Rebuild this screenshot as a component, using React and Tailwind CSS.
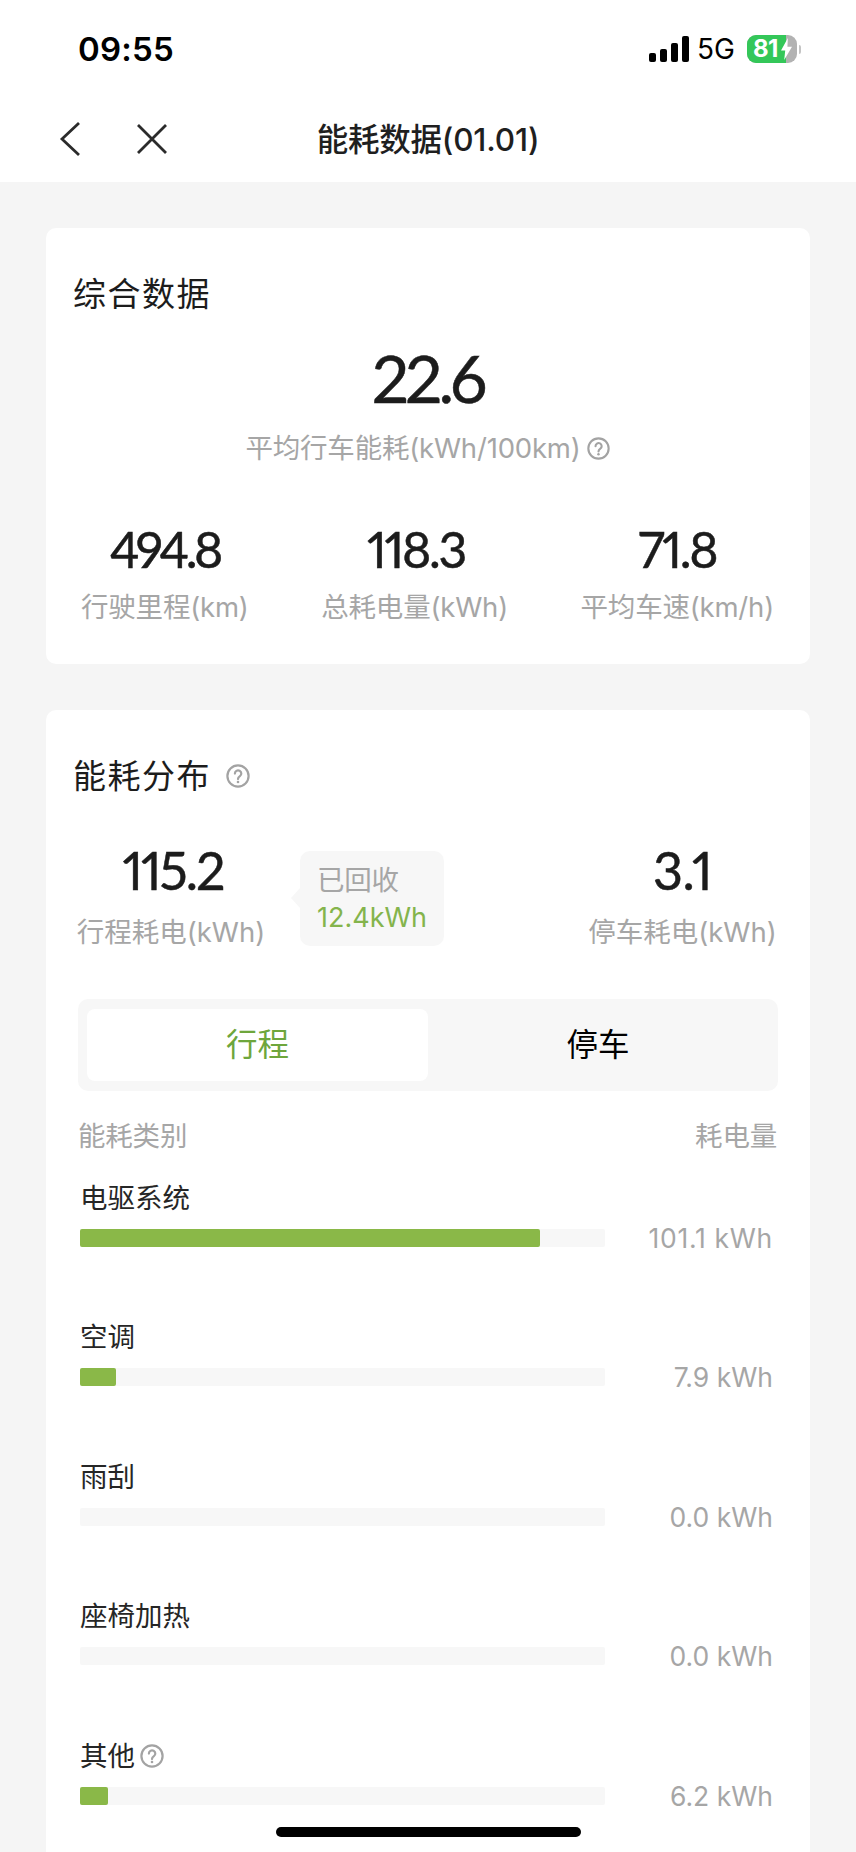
const Help = ({ className }) => (
  <svg viewBox="0 0 24 24" className={className} fill="none" stroke="#a3a3a3">
    <circle cx="12" cy="12" r="10.6" strokeWidth="2.2" />
    <path d="M8.9 9.6a3.2 3.2 0 1 1 5 2.6c-1.2.8-1.9 1.5-1.9 2.9" strokeWidth="2.2" strokeLinecap="round" />
    <circle cx="12" cy="18" r="1.3" fill="#a3a3a3" stroke="none" />
  </svg>
);

const num = "font-['Lato','Inter',sans-serif] text-[#1c1c1c] [-webkit-text-stroke:0.5px_#1c1c1c] proportional-nums";
const label = "text-[27.5px] leading-[36px] text-[#a6a6a6] whitespace-nowrap tracking-[-0.2px]";

const Stat = ({ value, text, extra }) => (
  <div className="flex flex-col items-center">
    <div className={`${num} text-[50px] leading-[50px] h-[50px] ${extra}`}>{value}</div>
    <div className={`mt-[15px] ${label}`}>{text}</div>
  </div>
);

const rows = [
  { name: "电驱系统", fill: "w-[460px]", value: "101.1 kWh", extra: "tracking-[0.7px]" },
  { name: "空调", fill: "w-[36px]", value: "7.9 kWh", extra: "" },
  { name: "雨刮", fill: "w-0", value: "0.0 kWh", extra: "" },
  { name: "座椅加热", fill: "w-0", value: "0.0 kWh", extra: "" },
  { name: "其他", fill: "w-[28px]", value: "6.2 kWh", extra: "", help: true },
];

export default function App() {
  return (
    <div className="relative w-[856px] h-[1852px] overflow-hidden bg-[#f5f5f5] font-['Inter','Noto_Sans_CJK_SC',sans-serif]">
      <div className="bg-white h-[182px]">
        <div className="h-[98px] flex items-center justify-between pl-[78px] pr-[55px]">
          <div className="text-[33px] leading-[40px] font-semibold text-black tracking-[0.2px]">09:55</div>
          <div className="flex items-center">
            <div className="flex items-end gap-[4px] h-[26px]">
              <div className="w-[7px] h-[9px] rounded-[2px] bg-black" />
              <div className="w-[7px] h-[13px] rounded-[2px] bg-black" />
              <div className="w-[7px] h-[19px] rounded-[2px] bg-black" />
              <div className="w-[7px] h-[26px] rounded-[2px] bg-black" />
            </div>
            <div className="ml-[8px] text-[28px] leading-[30px] text-black">5G</div>
            <div className="ml-[12px] relative w-[50px] h-[28px] rounded-[9px] overflow-hidden bg-[#b2b2b2] flex">
              <div className="w-[39px] bg-[#34c759] pl-[6px] text-white text-[24px] leading-[28px] font-bold tracking-[-0.5px]">81</div>
              <svg viewBox="0 0 12 24" className="absolute left-[34px] top-[3px] w-[11px] h-[22px]">
                <path d="M7.5 0 0 13.5h4.6L3.5 24 12 9.5H7z" fill="#fff" />
              </svg>
            </div>
            <div className="ml-[2px] w-[2px] h-[9px] rounded-r-full bg-[#c4c4c4]" />
          </div>
        </div>
        <div className="relative h-[84px] flex items-center justify-center">
          <svg viewBox="0 0 24 36" className="absolute left-[58px] top-[23px] w-[24px] h-[36px]" fill="none" stroke="#2b2b2b" strokeWidth="2.8">
            <path d="M21 2 4 18l17 16" />
          </svg>
          <svg viewBox="0 0 34 34" className="absolute left-[135px] top-[24px] w-[34px] h-[34px]" fill="none" stroke="#2b2b2b" strokeWidth="2.8">
            <path d="m3 3 28 28M31 3 3 31" />
          </svg>
          <div className="text-[31.5px] leading-[40px] font-medium text-[#1f1f1f] tracking-[-0.2px]">能耗数据(01.01)</div>
        </div>
      </div>

      <div className="mt-[46px] mx-[46px] h-[436px] bg-white rounded-[10px] pt-[46px] pl-[27px] pr-[28px]">
        <div className="text-[33px] leading-[40px] text-[#1c1c1c] tracking-[1.5px]">综合数据</div>
        <div className={`${num} mt-[29px] text-center text-[66px] leading-[70px] tracking-[-4px]`}>22.6</div>
        <div className="mt-[17px] flex items-center justify-center gap-[6px]">
          <span className={label}>平均行车能耗(kWh/100km)</span>
          <Help className="w-[23px] h-[23px]" />
        </div>
        <div className="-ml-[27px] -mr-[28px] mt-[58px] pl-[35px] pr-[36px] flex justify-between">
          <Stat value="494.8" text="行驶里程(km)" extra="tracking-[-3.5px]" />
          <Stat value="118.3" text="总耗电量(kWh)" extra="tracking-[-2.3px] ml-[3px]" />
          <Stat value="71.8" text="平均车速(km/h)" extra="tracking-[-2.3px]" />
        </div>
      </div>

      <div className="mt-[46px] mx-[46px] h-[1200px] bg-white rounded-t-[10px] pt-[46px] px-[28px]">
        <div className="flex items-center gap-[15px] -ml-[1px]">
          <div className="text-[33px] leading-[40px] text-[#1c1c1c] tracking-[1.5px]">能耗分布</div>
          <Help className="w-[24px] h-[24px]" />
        </div>
        <div className="mt-[48px] -mx-[28px] pl-[32px] pr-[34px] flex items-start">
          <div className="w-[186px] flex flex-col items-center">
            <div className={`${num} text-[52px] leading-[52px] tracking-[-2px] h-[52px] ml-[4px]`}>115.2</div>
            <div className="mt-[18px] text-[27.5px] leading-[36px] text-[#a6a6a6] whitespace-nowrap">行程耗电(kWh)</div>
          </div>
          <div className="relative ml-[36px] mt-[7px] w-[144px] h-[95px] rounded-[10px] bg-[#f7f7f7] pl-[17px] pt-[11px]">
            <div className="absolute -left-[9px] top-[37px] w-0 h-0 border-y-[10px] border-y-transparent border-r-[9px] border-r-[#f7f7f7]" />
            <div className={label}>已回收</div>
            <div className="mt-[2px] text-[27px] leading-[36px] text-[#84b44c] whitespace-nowrap">12.4kWh</div>
          </div>
          <div className="ml-auto w-[187px] flex flex-col items-center">
            <div className={`${num} text-[52px] leading-[52px] tracking-[-0.5px] h-[52px]`}>3.1</div>
            <div className="mt-[18px] text-[27.5px] leading-[36px] text-[#a6a6a6] whitespace-nowrap">停车耗电(kWh)</div>
          </div>
        </div>

        <div className="mt-[49px] ml-[4px] w-[700px] h-[92px] rounded-[10px] bg-[#f7f7f7] p-[10px] pl-[9px] flex">
          <div className="w-[341px] h-[72px] rounded-[8px] bg-white flex items-center justify-center text-[31.5px] leading-[40px] text-[#6ea63c]">行程</div>
          <div className="flex-1 flex items-center justify-center text-[31.5px] leading-[40px] text-black">停车</div>
        </div>

        <div className={`mt-[27px] ml-[4px] w-[699px] flex justify-between ${label}`}>
          <span>能耗类别</span>
          <span>耗电量</span>
        </div>

        <div className="mt-[26px] ml-[6px] w-[693px] flex flex-col gap-[62.4px]">
          {rows.map((r) => (
            <div key={r.name} className="h-[77px]">
              <div className="flex items-center gap-[5px] h-[36px]">
                <span className="text-[27.5px] leading-[36px] text-[#262626]">{r.name}</span>
                {r.help && <Help className="w-[24px] h-[24px]" />}
              </div>
              <div className="mt-[2px] flex items-center h-[40px]">
                <div className="w-[525px] h-[18px] rounded-[2px] bg-[#f7f7f7]">
                  <div className={`${r.fill} h-full rounded-[2px] bg-[#8ab848]`} />
                </div>
                <div className={`flex-1 text-right text-[26.5px] leading-[36px] text-[#a6a6a6] whitespace-nowrap ${r.extra}`}>{r.value}</div>
              </div>
            </div>
          ))}
        </div>
      </div>

      <div className="absolute left-[276px] top-[1827px] w-[305px] h-[10px] rounded-full bg-black" />
    </div>
  );
}
